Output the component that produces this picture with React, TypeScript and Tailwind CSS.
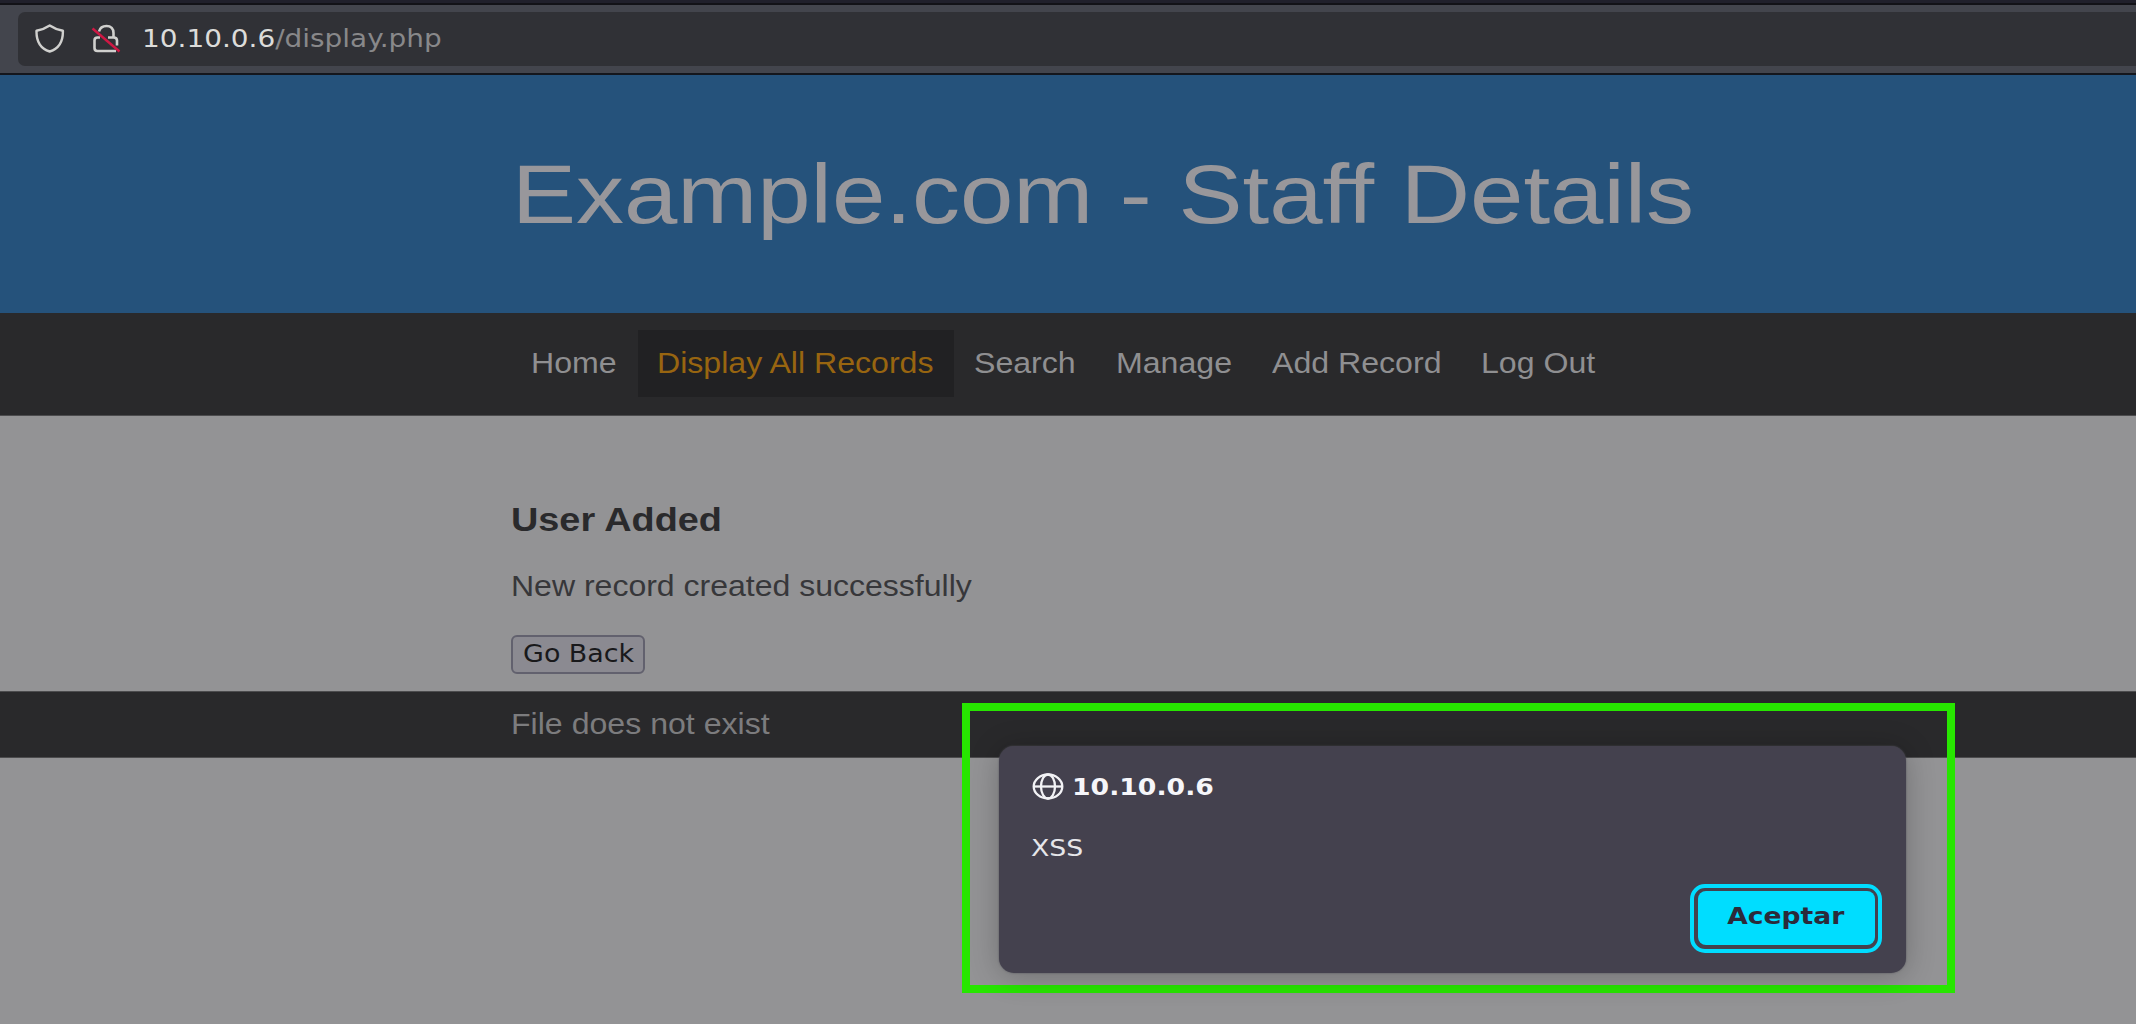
import React from "react";

const navItems = [
  { label: "Home", box: "w-[126px] pl-[19px]", active: false },
  { label: "Display All Records", box: "w-[316px] pl-[19px]", active: true },
  { label: "Search", box: "w-[142px] pl-[20px]", active: false },
  { label: "Manage", box: "w-[156px] pl-[20px]", active: false },
  { label: "Add Record", box: "w-[209px] pl-[20px]", active: false },
  { label: "Log Out", box: "w-[156px] pl-[20px]", active: false },
];

function ShieldIcon() {
  return (
    <svg className="ml-[17px] h-[30px] w-[30px] shrink-0" viewBox="0 0 30 30" fill="none" stroke="#d0d0ce" strokeWidth="2.4" strokeLinejoin="round">
      <path d="M14.7 1.500 C11 4 6.500 5.800 1.500 6.800 C1.300 15.500 3.500 24 14.7 27.500 C25.900 24 28.100 15.500 27.900 6.800 C22.900 5.800 18.400 4 14.7 1.500Z" />
    </svg>
  );
}

function InsecureLockIcon() {
  return (
    <svg className="ml-[26px] h-[30px] w-[30px] shrink-0" viewBox="0 0 30 30" fill="none" stroke="#d0d0ce" strokeWidth="2.6">
      <path d="M8 7.500 C9 3.800 12 2 15.500 2 C20 2 22.500 5 22.500 9 V14" />
      <path d="M9 13.500 H6.500 Q3.500 13.500 3.500 16.500 V24 Q3.500 27 6.500 27 H25 M17 13.500 H22.500 Q26 13.500 26 16.500 V21.500" />
      <path d="M1.500 4.500 L28.500 27.500" stroke="#cf1844" strokeWidth="2.4" />
    </svg>
  );
}

function GlobeIcon() {
  return (
    <svg className="h-[27px] w-[32px] shrink-0" viewBox="0 0 32 27" fill="none" stroke="#f3f3f6" strokeWidth="2.3">
      <ellipse cx="16" cy="13.500" rx="14.300" ry="12" />
      <ellipse cx="16" cy="13.500" rx="7" ry="12" />
      <path d="M2 13.500 H30" />
    </svg>
  );
}

function AddressBar() {
  return (
    <header className="flex h-[75px] flex-col border-b-2 border-[#14161c] bg-[#43454d]">
      <div className="h-[5px] shrink-0 border-b-2 border-[#121217] bg-[#20202b]" />
      <div className="mt-[7px] ml-[18px] flex h-[54px] items-center rounded-l-[7px] bg-[#303136]">
        <ShieldIcon />
        <InsecureLockIcon />
        <div className="ml-[21px] h-[30px] origin-left scale-x-[1.163] font-['DejaVu_Sans'] text-[24px] leading-[30px] whitespace-nowrap text-[#dcdcda]">
          10.10.0.6<span className="text-[#88888a]">/display.php</span>
        </div>
      </div>
    </header>
  );
}

function AlertDialog() {
  return (
    <div className="absolute top-[703px] left-[962px] h-[290px] w-[993px] border-8 border-[#27e600] pt-[34.500px] pl-[29px]">
      <div className="flex h-[227px] w-[907px] flex-col rounded-[15px] bg-[#44414e] pt-[27px] pr-[24px] pl-[33px] font-['DejaVu_Sans'] text-[23.500px] shadow-[0_3px_30px_rgba(0,0,0,0.24),0_0_2px_rgba(90,90,98,0.9)]">
        <div className="flex h-[28px] items-center text-[#f6f6fa]">
          <GlobeIcon />
          <span className="ml-[8px] origin-left scale-x-[1.136] leading-[28px] font-bold">10.10.0.6</span>
        </div>
        <p className="-ml-px mt-[32px] h-[30px] w-fit origin-left scale-x-[1.14] leading-[30px] text-[#e6e6ea]">XSS</p>
        <button className="mt-[21px] flex h-[69px] w-[192px] items-center justify-center self-end rounded-[15px] border-4 border-[#00ddff] p-[3.500px]">
          <span className="flex h-full w-full items-center justify-center rounded-[8px] bg-[#00ddff] pb-[3px] font-bold text-[#2b2a3a]">
            <span className="scale-x-[1.13]">Aceptar</span>
          </span>
        </button>
      </div>
    </div>
  );
}

export default function App() {
  return (
    <div className="relative h-[1024px] w-[2136px] overflow-hidden bg-[#939395] font-['Liberation_Sans']">
      <AddressBar />
      <div className="h-[238px] bg-[#25527b] pt-[73px] pl-[512px]">
        <h1 className="w-fit origin-left scale-x-[1.156] text-[83px] leading-[94px] whitespace-nowrap text-[#98979b]">Example.com - Staff Details</h1>
      </div>
      <nav className="flex h-[103px] border-b border-[#4c4c4e] bg-[#29292b] pt-[17px] pl-[512px] text-[30px] leading-[65px] text-[#8f8f91]">
        {navItems.map((item) => (
          <a key={item.label} className={`${item.box} h-[67px] ${item.active ? "bg-[#212123] text-[#986510]" : ""}`}>
            <span className="inline-block origin-left scale-x-[1.07] whitespace-nowrap">{item.label}</span>
          </a>
        ))}
      </nav>
      <main className="h-[275px] pt-[83px] pl-[511px]">
        <h2 className="w-fit origin-left scale-x-[1.113] text-[34px] leading-[40px] font-bold text-[#2a2a2c]">User Added</h2>
        <p className="mt-[29px] w-fit origin-left scale-x-[1.067] text-[30px] leading-[36px] text-[#37373a]">New record created successfully</p>
        <button className="mt-[31px] flex h-[39px] w-[134px] items-center justify-center rounded-[6px] border-2 border-[#62616e] bg-[#8b8a91] pb-[2px] pl-px font-['DejaVu_Sans'] text-[24px] text-[#19191b]">
          <span className="scale-x-[1.12] whitespace-nowrap">Go Back</span>
        </button>
      </main>
      <footer className="h-[67px] border-y border-[#4c4c4e] bg-[#29292b] pl-[511px] text-[30px] leading-[63px] text-[#7c7c7e]">
        <p className="w-fit origin-left scale-x-[1.07]">File does not exist</p>
      </footer>
      <AlertDialog />
    </div>
  );
}
